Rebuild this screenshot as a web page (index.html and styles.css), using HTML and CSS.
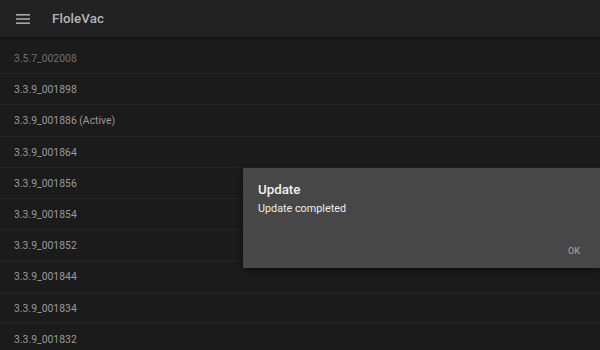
FILE: index.html
```html
<!DOCTYPE html>
<html>
<head>
<meta charset="utf-8">
<link rel="stylesheet" href="styles.css">
</head>
<body>
<div class="app">
  <header class="bar">
    <svg class="menu" width="14" height="10" viewBox="0 0 14 10"><rect x="0" y="0" width="14" height="1.6" fill="#a8a8a8"/><rect x="0" y="4.2" width="14" height="1.6" fill="#a8a8a8"/><rect x="0" y="8.4" width="14" height="1.6" fill="#a8a8a8"/></svg>
    <span class="title">FloleVac</span>
  </header>
  <ul class="list">
    <li class="row dim">3.5.7_002008</li>
    <li class="row">3.3.9_001898</li>
    <li class="row">3.3.9_001886 (Active)</li>
    <li class="row">3.3.9_001864</li>
    <li class="row">3.3.9_001856</li>
    <li class="row">3.3.9_001854</li>
    <li class="row">3.3.9_001852</li>
    <li class="row">3.3.9_001844</li>
    <li class="row">3.3.9_001834</li>
    <li class="row">3.3.9_001832</li>
  </ul>
  <div class="dialog">
    <div class="d-title">Update</div>
    <div class="d-text">Update completed</div>
    <div class="d-actions"><span class="ok">OK</span></div>
  </div>
</div>
</body>
</html>
```
FILE: styles.css
```css
html, body {
  margin: 0;
  padding: 0;
  background: #1b1b1b;
  font-family: Roboto, "Liberation Sans", sans-serif;
}
.app {
  position: relative;
  width: 600px;
  height: 350px;
  overflow: hidden;
  background: #1b1b1b;
}
.bar {
  height: 37px;
  background: #222222;
  display: flex;
  align-items: center;
  padding-left: 16px;
  box-sizing: border-box;
  box-shadow: 0 1px 3px rgba(0,0,0,0.5);
  position: relative;
  z-index: 1;
}
.menu {
  display: block;
  margin-right: 22px;
}
.title {
  color: #b4b4b4;
  font-size: 13.3px;
  font-weight: 500;
  letter-spacing: 0.1px;
}
.list {
  list-style: none;
  margin: 0;
  padding: 6px 0 0 0;
}
.row {
  height: 31.2px;
  box-sizing: border-box;
  border-bottom: 1px solid #252525;
  display: flex;
  align-items: center;
  padding-left: 14px;
  padding-top: 1px;
  color: #999999;
  font-size: 10.4px;
}
.row.dim {
  color: #6f6f6f;
}
.dialog {
  position: absolute;
  left: 243px;
  top: 168px;
  width: 357px;
  height: 100px;
  background: #474747;
  box-sizing: border-box;
  padding: 13px 15px 0 15px;
  box-shadow: 0 2px 6px rgba(0,0,0,0.6);
  display: flex;
  flex-direction: column;
}
.d-title {
  color: #f2f2f2;
  font-size: 13.3px;
  font-weight: 500;
  height: 17px;
  line-height: 17px;
}
.d-text {
  color: #ececec;
  font-size: 10.8px;
  margin-top: 4px;
  line-height: 14px;
}
.d-actions {
  margin-top: auto;
  display: flex;
  justify-content: flex-end;
  padding: 0 5px 12px 0;
}
.ok {
  color: #9a9a9a;
  font-size: 9px;
  font-weight: 500;
}
```
